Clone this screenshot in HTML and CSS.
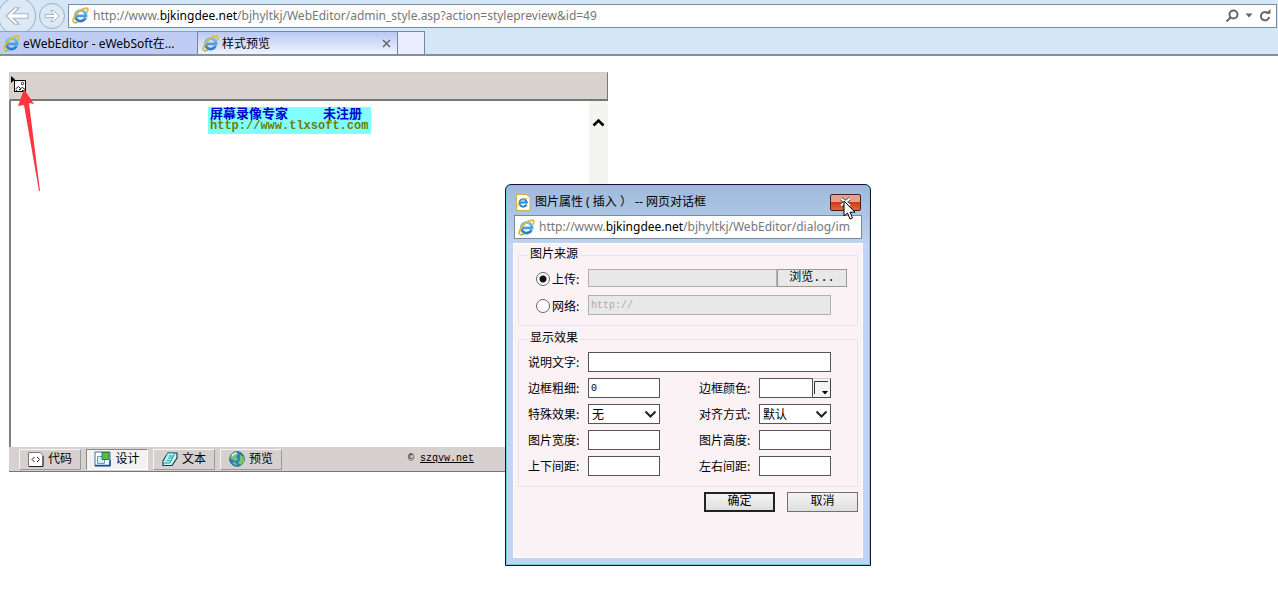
FILE: index.html
```html
<!DOCTYPE html>
<html lang="zh-CN">
<head>
<meta charset="utf-8">
<title>样式预览</title>
<link rel="stylesheet" href="styles.css">
</head>
<body>
<svg width="0" height="0" class="defs" aria-hidden="true">
  <defs>
    <linearGradient id="blue" x1="0" y1="0" x2="0" y2="1"><stop offset="0" stop-color="#6cc8f4"/><stop offset="1" stop-color="#2a78cc"/></linearGradient>
    <symbol id="ie" viewBox="0 0 17 17">
      <path d="M13.6 10.8A5.3 5.3 0 1 1 14 8.9H4.6" fill="none" stroke="url(#blue)" stroke-width="2.8"/>
      <path d="M2.2 15.6C-.4 14 2.6 7.600 7.400 4.200 11.200 1.400 15 .4 15.700 2.100c.4 1-.1 2.300-.8 3.500" fill="none" stroke="#e8b92c" stroke-width="1.800"/>
      <path d="M2.200 15.600c1 .5 2.700-.1 4.100-.9" fill="none" stroke="#8dbb45" stroke-width="1.500"/>
    </symbol>
  </defs>
</svg>
<header class="chrome">
  <div class="nav">
    <button class="round back" aria-label="后退"><svg width="26" height="22" viewBox="0 0 22 20"><path d="M1 10 9 2.500h4L7.500 8H21v4H7.500l5.500 5.500H9z"/></svg></button>
    <button class="round forward" aria-label="前进"><svg width="16" height="14" viewBox="0 0 16 14"><path d="M15 7 9.500 1.500h-3L10 5.500H1v3h9l-3.500 4h3z"/></svg></button>
    <div class="address">
      <svg width="17" height="17"><use href="#ie"/></svg>
      <span class="url">http://www.<b>bjkingdee.net</b>/bjhyltkj/WebEditor/admin_style.asp?action=stylepreview&amp;id=49</span>
      <button class="plain" aria-label="搜索"><svg width="14" height="14" viewBox="0 0 14 14"><circle cx="8.500" cy="5.500" r="4" /><path d="M5.500 8.500 1.500 12.500"/></svg></button>
      <button class="plain" aria-label="下拉"><svg width="8" height="5" viewBox="0 0 8 5"><path d="M.5.500h7L4 4.500z" class="solid"/></svg></button>
      <button class="plain" aria-label="刷新"><svg width="12" height="13" viewBox="0 0 12 13"><path d="M9.300 4.400A4.200 4.200 0 1 0 10.200 8"/><path d="M6.500 4.800h5V0z" class="solid"/></svg></button>
    </div>
  </div>
  <nav class="tabs">
    <div class="tab"><svg width="17" height="17"><use href="#ie"/></svg><span>eWebEditor - eWebSoft在...</span></div>
    <div class="tab active"><svg width="17" height="17"><use href="#ie"/></svg><span>样式预览</span><button class="plain" aria-label="关闭标签"><svg width="9" height="9" viewBox="0 0 9 9"><path d="m1 1 7 7M8 1 1 8"/></svg></button></div>
    <button class="newtab" aria-label="新建标签"></button>
  </nav>
</header>
<main>
  <section class="editor">
    <div class="toolbar">
      <button class="insert" aria-label="插入图片"><svg width="18" height="18" viewBox="0 0 18 18"><path d="M0 0v7l4-3.500z"/><rect x="3.500" y="4.500" width="11" height="11" fill="#fff" stroke="#000"/><circle cx="11.500" cy="7.500" r="1.200" fill="none" stroke="#000" stroke-width=".8"/><path d="m4.500 13 3-2.500 2 2 2-1 2.500 2M5 14.500h1m2-1h2m1 1h2" fill="none" stroke="#000" stroke-width=".9"/></svg></button>
    </div>
    <div class="canvas">
      <div class="scroll"><svg width="13" height="9" viewBox="0 0 13 9"><path d="m1.500 7.500 5-5 5 5" fill="none" stroke="#000" stroke-width="2.600"/></svg></div>
    </div>
    <div class="status">
      <button class="mode"><svg width="16" height="15" viewBox="0 0 16 15"><path d="M.5.500h12l2.500 3v11H.5z" fill="#fff" stroke="#777"/><path d="M15 4v10.500H1" fill="none" stroke="#222"/><path d="M6.500 5 4 7.500 6.500 10M9 5l2.500 2.500L9 10" fill="none" stroke="#222"/></svg>代码</button>
      <button class="mode on"><svg width="17" height="16" viewBox="0 0 17 16"><path d="M1 1h15v14H1z" fill="#fff" stroke="#2874b5"/><path d="M3.500 5.500h7v7h-7z" fill="#d9eafc" stroke="#5d9bd2"/><path d="M8 1.500h7v7H8z" fill="#64b94c" stroke="#2c7a35"/><path d="M1 14.500h15V9" fill="none" stroke="#0d4e95" stroke-width="1.500"/></svg>设计</button>
      <button class="mode"><svg width="16" height="15" viewBox="0 0 16 15"><path d="M6 1h9v5l-5 7.500H1V9z" fill="#cdfafa" stroke="#123e56" stroke-width="1.200"/><path d="M6 1h7L8 11H1" fill="#b9f5f5" stroke="#2a8e9e"/><path d="M7 4h4M6 6h4M4.500 8.500h4" stroke="#2a9eaa"/></svg>文本</button>
      <button class="mode"><svg width="16" height="16" viewBox="0 0 16 16"><circle cx="8" cy="8" r="7.300" fill="#2b83bd" stroke="#26618a"/><path d="M3 3c3-2 5-1 6 0L7 6l2 2-2 2-3-1-3-2zM11 4l4 2v5l-3 3-3-2 2-3zM4 11l3 1 1 3-4-2z" fill="#75c66a"/><path d="M3 5q2-3 5-3" stroke="#d9f4fb" fill="none" stroke-width="1.500"/></svg>预览</button>
      <span class="credit">© <a href="#">szqvw.net</a></span>
    </div>
  </section>
</main>
<svg class="arrow" width="24" height="104" viewBox="0 0 24 104"><path d="M6 0 16 15l-5-1 11 88h-1L6 16l-6 1z" fill="#fb3640"/></svg>
<div class="watermark"><span class="wm-top"><span>屏幕录像专家</span><span>未注册</span></span><span class="wm-url">http://www.tlxsoft.com</span></div>
<section class="dialog" role="dialog" aria-label="图片属性">
  <div class="titlebar">
    <svg width="16" height="17" viewBox="0 0 16 17"><path d="M1.500.500h10l3.500 3v13H1.500z" fill="#fff" stroke="#d3ae51"/><path d="M11.500 10.500a3.700 3.700 0 1 1 .3-2H5" fill="none" stroke="#2486d2" stroke-width="2"/><path d="M3 13C1 11 7 4 12.500 4.500" fill="none" stroke="#e8b92c"/></svg>
    <span>图片属性 ( 插入 ）&nbsp;-- 网页对话框</span>
    <button class="close" aria-label="关闭"><svg width="13" height="10" viewBox="0 0 13 10"><path d="m2 1.500 9 7M11 1.500l-9 7" stroke="#555" stroke-width="3.500"/><path d="m2 1.500 9 7M11 1.500l-9 7" stroke="#fff" stroke-width="2"/></svg></button>
  </div>
  <div class="address small">
    <svg width="17" height="17"><use href="#ie"/></svg>
    <span class="url">http://www.<b>bjkingdee.net</b>/bjhyltkj/WebEditor/dialog/im</span>
  </div>
  <form class="content">
    <fieldset>
      <legend>图片来源</legend>
      <div class="source">
        <label><input type="radio" name="src" checked>上传:</label>
        <div class="file"><input type="text" aria-label="上传文件" disabled><button type="button">浏览...</button></div>
        <label><input type="radio" name="src">网络:</label>
        <input type="text" class="net" aria-label="网络地址" value="http://" disabled>
      </div>
    </fieldset>
    <fieldset>
      <legend>显示效果</legend>
      <div class="effects">
        <label for="alt">说明文字:</label><input id="alt" type="text" class="wide">
        <label for="bw">边框粗细:</label><input id="bw" type="text" value="0">
        <label for="bc">边框颜色:</label><div class="color"><input id="bc" type="text"><button type="button" aria-label="选择颜色"><svg width="17" height="17" viewBox="0 0 17 17"><path d="M1.500 14V1.500H15" fill="none" stroke="#333"/><path d="M9 11h6l-3 3.500z"/></svg></button></div>
        <label for="fx">特殊效果:</label><div class="pick"><select id="fx"><option>无</option></select><svg width="13" height="9" viewBox="0 0 13 9"><path d="m1.500 1.500 5 5 5-5"/></svg></div>
        <label for="al">对齐方式:</label><div class="pick"><select id="al"><option>默认</option></select><svg width="13" height="9" viewBox="0 0 13 9"><path d="m1.500 1.500 5 5 5-5"/></svg></div>
        <label for="w">图片宽度:</label><input id="w" type="text">
        <label for="h">图片高度:</label><input id="h" type="text">
        <label for="vs">上下间距:</label><input id="vs" type="text">
        <label for="hs">左右间距:</label><input id="hs" type="text">
      </div>
    </fieldset>
    <div class="actions"><button type="button" class="default">确定</button><button type="button">取消</button></div>
  </form>
</section>
<svg class="cursor" width="13" height="20" viewBox="0 0 13 20"><path d="M1 1v15l3.500-3 2.500 6 2.500-1L7 12.200h5z" fill="#fff" stroke="#000"/></svg>
</body>
</html>
```

FILE: styles.css
```css
* { box-sizing: border-box; }
body {
  margin: 0;
  min-height: 100vh;
  background: #fff;
  color: #000;
  font: 12px/16px "Noto Sans", "Noto Sans CJK SC", sans-serif;
}
button, input, select { font: inherit; color: inherit; margin: 0; padding: 0; border-radius: 0; }
svg { display: block; flex: none; }
.defs { position: absolute; }
.plain, .insert { border: 0; background: none; }
.plain svg { fill: none; stroke: #666; stroke-width: 2; }
.plain .solid { fill: #666; stroke: none; }

.chrome { background: #d5e7f6; border-bottom: 2px solid #858e9b; }
.nav { display: flex; align-items: center; height: 31px; padding-right: 1px; overflow: hidden; }
.round {
  display: grid;
  place-items: center;
  flex: none;
  border: 1px solid #9aaec5;
  border-radius: 50%;
  background: #dce8f4;
}
.round svg { fill: #fff; stroke: #a3b5ca; }
.back { width: 38px; height: 38px; margin-left: -2px; }
.forward { width: 26px; height: 26px; margin: 0 3px; }
.address {
  display: flex;
  align-items: center;
  flex: 1;
  gap: 4px;
  height: 24px;
  padding: 0 5px 0 3px;
  border: 1px solid #738aa5;
  background: #fff;
}
.url { flex: 1; min-width: 0; overflow: hidden; white-space: nowrap; color: #777; }
.url b { font-weight: 400; color: #000; }
.address .plain { margin-left: 2px; }

.tabs { display: flex; height: 23px; }
.tab {
  display: flex;
  align-items: center;
  gap: 3px;
  width: 197px;
  padding: 1px 0 0 3px;
  border-top: 1px solid #8fa3bf;
  background: #bfcdf4;
  white-space: nowrap;
}
.tab.active {
  width: 201px;
  padding: 1px 6px 0 4px;
  border: 1px solid #7186a5;
  border-bottom: 0;
  background: linear-gradient(#b9c9f1, #eef3ff);
}
.tab.active span { flex: 1; }
.tab .plain svg { stroke-width: 1.5; }
.newtab { width: 27px; border: 1px solid #7186a5; border-left: 0; border-bottom: 0; background: #e9edff; }

main { padding: 16px 9px; }
.editor { display: flex; flex-direction: column; max-width: 599px; }
.toolbar {
  height: 29px;
  padding: 3px 1px;
  border: 1px solid #cfcfcf;
  border-right-color: #777;
  border-bottom: 2px solid #777;
  background: #d8d2cf;
}
.canvas { display: flex; justify-content: flex-end; height: 346px; border-left: 2px solid #808080; }
.scroll { display: flex; justify-content: center; width: 19px; padding-top: 17px; background: #f4f4f0; }
.status {
  display: flex;
  align-items: center;
  gap: 5px;
  height: 25px;
  padding: 0 10px;
  border-bottom: 1px solid #777;
  background: #d6d1ce;
}
.mode {
  display: flex;
  align-items: center;
  justify-content: center;
  gap: 4px;
  width: 62px;
  height: 21px;
  border: 1px solid;
  border-color: #f5f5f5 #999 #999 #f5f5f5;
  background: #d6d1ce;
  font-size: 12px;
}
.mode.on { border-color: #888 #fff #fff #888; background: #f4f2f1; }
.credit { margin-left: 121px; font: 10px/16px "Liberation Mono", monospace; white-space: nowrap; }
.credit a { color: #000; }

.arrow { position: absolute; left: 18px; top: 89px; }
.watermark {
  position: absolute;
  left: 208px;
  top: 107px;
  width: 163px;
  padding: 0 2px;
  background: #7fffff;
  font-weight: 700;
}
.watermark > span { display: flex; }
.wm-top { gap: 35px; color: #0000d0; font-family: "Noto Sans CJK SC", sans-serif; font-size: 13px; line-height: 12px; white-space: nowrap; }
.wm-url { color: #6f7d00; font-family: "Liberation Mono", monospace; line-height: 15px; }

.dialog {
  position: absolute;
  left: 505px;
  top: 184px;
  width: 366px;
  padding: 0 7px 7px;
  border: 1px solid #0c1a2b;
  border-radius: 6px 6px 0 0;
  background: linear-gradient(#9db9dc, #b9cee9 50px, #c0d4f4 60px);
  box-shadow: inset 0 0 0 1px #7cc8d8;
}
.titlebar { display: flex; align-items: center; gap: 4px; height: 30px; padding: 4px 2px 0; }
.titlebar span { flex: 1; white-space: nowrap; }
.close {
  display: grid;
  place-items: center;
  width: 31px;
  height: 17px;
  border: 1px solid #4a1d18;
  border-radius: 2px;
  background: linear-gradient(#e9a08e 45%, #cf3b16 50%, #e0693c);
}
.small { margin: 0 1px 4px; padding: 0 3px; }
.content {
  height: 315px;
  padding: 3px 4px 0;
  border: 1px solid #fff;
  background: #fbf2f5;
  font-family: "Liberation Mono", "Noto Sans CJK SC", monospace;
  font-size: 12px;
}
.content label { white-space: nowrap; font-family: "Noto Sans CJK SC", sans-serif; }
fieldset { margin: 0 0 5px; padding: 0 10px 10px 9px; border: 1px solid #e4e4f2; min-width: 0; }
legend { padding: 0 2px; margin-left: 0; }
.source { display: grid; grid-template-columns: 60px 1fr; row-gap: 8px; padding-top: 6px; }
.source label { display: flex; align-items: center; padding: 2px 0 0 8px; gap: 2px; }
input[type="radio"] {
  appearance: none;
  width: 14px;
  height: 14px;
  border: 1px solid #666;
  border-radius: 50%;
  background: #fff;
}
input[type="radio"]:checked { background: radial-gradient(circle, #111 3px, #fff 4px); }
input[type="text"] { height: 20px; min-width: 0; padding: 0 2px; border: 1px solid #555; background: #fff; font-size: 10px; }
input[type="text"]:disabled { border-color: #b0b0b0; background: #e8e8e8; color: #aaa; }
.file { display: flex; height: 18px; }
.file input[type="text"] { flex: 1; height: 18px; }
.file button { width: 70px; border: 1px solid #999; background: #e8e8e8; line-height: 14px; }
.net { width: 243px; }
.effects { display: grid; grid-template-columns: 60px 111px 60px 72px; align-items: center; row-gap: 6px; padding-top: 5px; }
.effects > input, .pick { width: 72px; }
.effects > .wide { grid-column: 2 / 5; width: auto; }
.color { display: flex; }
.color input { flex: 1; }
.color button { width: 18px; border: 1px solid #444; border-top-color: #ccc; border-left: 0; background: #f4f4f4; }
.pick { display: grid; align-items: center; }
.pick > * { grid-area: 1 / 1; }
.pick select {
  appearance: none;
  width: 100%;
  height: 20px;
  padding-left: 3px;
  border: 1px solid #555;
  background: #fff;
  font-family: "Noto Sans CJK SC", sans-serif;
}
.pick svg { justify-self: end; margin-right: 3px; fill: none; stroke: #222; stroke-width: 2; pointer-events: none; }
.actions { display: flex; justify-content: flex-end; gap: 12px; }
.actions button { width: 71px; height: 20px; border: 1px solid #707070; background: linear-gradient(#f4f4f4, #dedede); line-height: 16px; }
.actions .default { border: 2px solid #222; }

.cursor { position: absolute; left: 843px; top: 200px; }
```
